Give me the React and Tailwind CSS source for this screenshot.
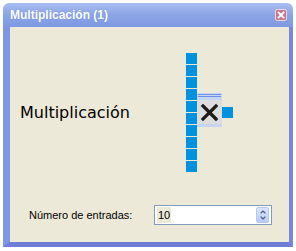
import { ChevronUp, ChevronDown } from "lucide-react";

function MultGlyph() {
  const squares = Array.from({ length: 10 }, (_, i) => i);
  return (
    <svg width="48" height="120" viewBox="0 0 48 120" shapeRendering="crispEdges">
      {squares.map((i) => (
        <rect key={i} x="0" y={i * 12} width="11" height="11" fill="#0092de" />
      ))}
      <rect x="11" y="40" width="25" height="34" fill="#c9d6f1" />
      <rect x="11" y="47" width="25" height="24" fill="#dddddd" />
      <rect x="12" y="41" width="23" height="1" fill="#6f8ee6" />
      <rect x="12" y="43" width="23" height="1" fill="#6f8ee6" />
      <path d="M17 53 L30 66 M30 53 L17 66" stroke="#1c1a1a" strokeWidth="3.2" strokeLinecap="square" shapeRendering="auto" />
      <rect x="36" y="54" width="11" height="11" fill="#0092de" />
    </svg>
  );
}

export default function App() {
  return (
    <div className="w-[296px] h-[251px] bg-white pt-[3px] pl-[3px]">
      <div className="w-[290px] h-[244px] flex flex-col">
        {/* Title bar */}
        <div className="h-[24px] flex items-center justify-between pl-[7px] pr-[6px] rounded-t-[6px] bg-gradient-to-b from-[#a9bdf0] via-[#8ba4e6] to-[#7f99e2]">
          <span className="text-white font-bold text-[12px] leading-none font-['Liberation_Sans',Arial,sans-serif] [text-shadow:0_0_1px_#6b82cc]">
            Multiplicación (1)
          </span>
          <div className="w-[12px] h-[12px] rounded-[2px] bg-[#c27a91] border border-[#ead6de] flex items-center justify-center">
            <svg width="8" height="8" viewBox="0 0 8 8">
              <path d="M1.5 1.5 L6.5 6.5 M6.5 1.5 L1.5 6.5" stroke="white" strokeWidth="1.8" strokeLinecap="square" />
            </svg>
          </div>
        </div>

        {/* Frame + client area */}
        <div className="flex-1 flex flex-col border-l-[7px] border-r-[4px] border-b-[5px] border-l-[#7f96e2] border-r-[#7488dc] border-b-[#6f7ed6] bg-[#ece9d8]">
          <div className="flex items-center pt-[26px] h-[146px]">
            <div className="w-[176px] pl-[10px] text-[16px] leading-none text-black font-['DejaVu_Sans',Verdana,sans-serif]">
              Multiplicación
            </div>
            <MultGlyph />
          </div>

          <div className="flex items-center mt-[32px] font-['Liberation_Sans',Arial,sans-serif] text-[11px] text-black">
            <span className="w-[144px] pl-[19px]">Número de entradas:</span>
            <div className="w-[118px] h-[20px] border border-[#7f9db9] bg-white flex items-center justify-between pl-[2px] pr-[2px]">
              <span className="bg-[#ece9d8] px-[1px] h-[16px] flex items-center text-[11px]">10</span>
              <div className="w-[13px] h-[16px] rounded-[2px] border border-[#b5c6f3] bg-gradient-to-b from-[#dbe5fd] to-[#b9cbf6] flex flex-col items-center justify-center text-[#4d6185]">
                <ChevronUp size={8} strokeWidth={3.5} className="-mb-[1px]" />
                <ChevronDown size={8} strokeWidth={3.5} className="-mt-[1px]" />
              </div>
            </div>
          </div>
        </div>
      </div>
    </div>
  );
}
